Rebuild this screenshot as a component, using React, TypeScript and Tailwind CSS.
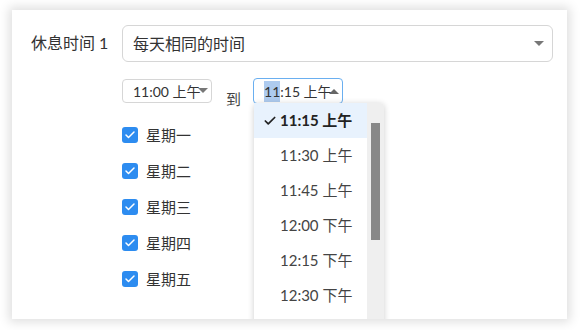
import { Check } from "lucide-react";

const days = ["星期一", "星期二", "星期三", "星期四", "星期五"];
const times = ["11:15 上午", "11:30 上午", "11:45 上午", "12:00 下午", "12:15 下午", "12:30 下午"];

function Caret({ up = false }: { up?: boolean }) {
    return (
        <svg width="10" height="6" viewBox="0 0 10 6" className="shrink-0">
            {up ? <path d="M0 6 L5 1 L10 6 Z" fill="#666" /> : <path d="M0 0 L10 0 L5 5 Z" fill="#777" />}
        </svg>
    );
}

export default function App() {
    return (
        <div className="h-[330px] w-[580px] bg-white pl-[12px] pt-[10px] font-['Lato','Noto_Sans_CJK_SC',sans-serif] text-[#333]">
            <div className="relative h-[309px] w-[555px] overflow-hidden bg-white shadow-[0_0_10px_3px_rgba(0,0,0,0.13)]">
                <div className="flex pl-[19px] pt-[15px]">
                    {/* Label */}
                    <div className="w-[91px] pt-[6px] text-[16px] leading-[24px] text-[#333]">休息时间 1</div>

                    <div className="flex flex-col">
                        {/* Schedule type */}
                        <div className="flex h-[37px] w-[431px] items-center justify-between rounded-[6px] border border-[#d6d6d6] pl-[10px] pr-[8px]">
                            <span className="text-[16px] text-[#333]">每天相同的时间</span>
                            <Caret />
                        </div>

                        {/* Time range */}
                        <div className="mt-[17px] flex items-start">
                            <div className="flex h-[24px] w-[90px] items-center rounded-[4px] border border-[#d6d6d6] pl-[10px] text-[14px] text-[#333]">
                                <span>11:00 上午</span>
                                <span className="-ml-[3px]"><Caret /></span>
                            </div>
                            <span className="ml-[14px] mt-[11px] text-[15px] leading-[18px] text-[#444]">到</span>
                            <div className="relative ml-[12px]">
                                <div className="-mt-[1px] flex h-[26px] w-[90px] items-center rounded-[4px] border border-[#6aaff0] pl-[10px] text-[14px] text-[#333]">
                                    <span className="bg-[#aecbef]">11</span>
                                    <span>:15 上午</span>
                                    <span className="-ml-[3px]"><Caret up /></span>
                                </div>

                                {/* Dropdown list */}
                                <div className="absolute left-[1px] top-[24px] z-10 flex h-[230px] w-[130px] rounded-[4px] bg-white shadow-[0_1px_6px_rgba(0,0,0,0.2)]">
                                    <ul className="flex-1">
                                        {times.map((t, i) => (
                                            <li
                                                key={t}
                                                className={`flex h-[35px] items-center text-[15px] ${i === 0 ? "bg-[#e8f2fd] font-bold text-[#222]" : "text-[#444]"}`}
                                            >
                                                <span className="flex w-[26px] justify-end pr-[3px]">
                                                    {i === 0 && <Check size={14} strokeWidth={3} className="text-[#222]" />}
                                                </span>
                                                <span>{t}</span>
                                            </li>
                                        ))}
                                    </ul>
                                    <div className="flex w-[17px] justify-center rounded-tr-[4px] bg-[#efefef] pt-[20px]">
                                        <div className="h-[117px] w-[9px] bg-[#888]" />
                                    </div>
                                </div>
                            </div>
                        </div>

                        {/* Days */}
                        <div className="mt-[19px] flex flex-col gap-[20px]">
                            {days.map((d) => (
                                <label key={d} className="flex items-center gap-[8px]">
                                    <span className="flex h-[16px] w-[16px] items-center justify-center rounded-[3px] bg-[#2d8cf0]">
                                        <Check size={12} strokeWidth={3} className="text-white" />
                                    </span>
                                    <span className="text-[15px] leading-[16px] text-[#333]">{d}</span>
                                </label>
                            ))}
                        </div>
                    </div>
                </div>
            </div>
        </div>
    );
}
